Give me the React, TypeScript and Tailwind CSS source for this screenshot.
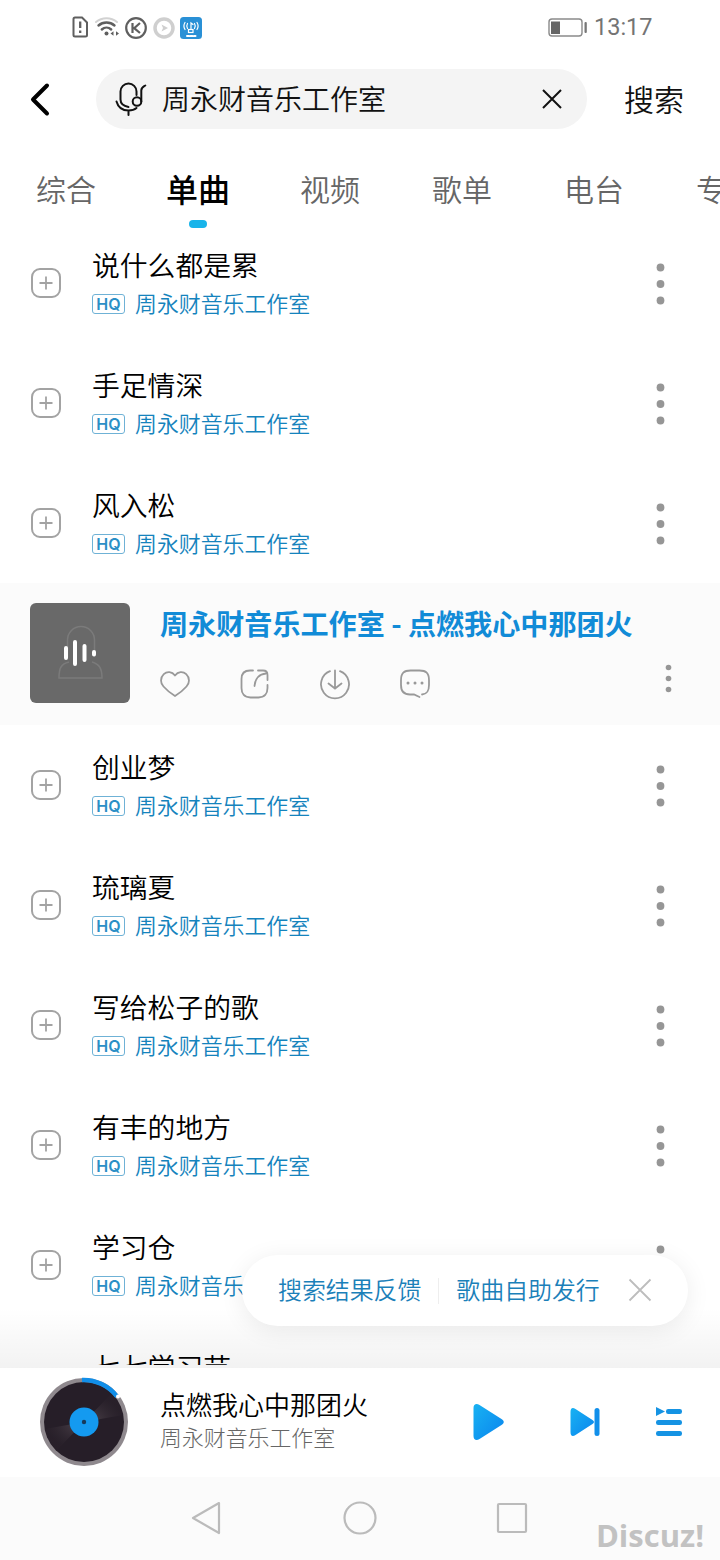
import React, { useState } from 'react';

interface SongRowProps {
  title: string;
  artist: string;
}

const ARTIST = '周永财音乐工作室';
const TABS = ['综合', '单曲', '视频', '歌单', '电台', '专辑'];
const SONGS_BEFORE = ['说什么都是累', '手足情深', '风入松'];
const SONGS_AFTER = ['创业梦', '琉璃夏', '写给松子的歌', '有丰的地方', '学习仓', '七七学习节'];

const StatusBar: React.FC = () => (
  <div className="flex h-14 items-center justify-between pl-[71px] pr-[68px]">
    <div className="flex items-center gap-[5px]">
      <svg width="18" height="24" viewBox="0 0 18 24" fill="none" stroke="#5f5f5f" strokeWidth="2">
        <path d="M2.500 3a1.500 1.500 0 0 1 1.500-1.500H11l5 5V19a1.500 1.500 0 0 1-1.500 1.500H4a1.500 1.500 0 0 1-1.500-1.500Z" />
        <path d="M9.200 5.500v6.500M9.200 14.500v2.500" strokeWidth="2.300" />
      </svg>
      <svg width="26" height="24" viewBox="0 0 26 24" fill="none" strokeWidth="2" strokeLinecap="round">
        <path d="M2 6C8 1 17 1 23 6" stroke="#d2d2d2" />
        <path d="M4.500 9.500C9 5.500 16 5.500 20.500 9.500" stroke="#5f5f5f" strokeWidth="2.400" />
        <path d="M7.800 13.500C10.500 11 14.500 11 17.200 13.500" stroke="#5f5f5f" strokeWidth="2.400" />
        <circle cx="12.500" cy="17.500" r="2" fill="#5f5f5f" />
        <path d="M16.500 17.500l3-2.300v4.600ZM25 17.500l-3-2.300v4.600Z" fill="#5f5f5f" />
      </svg>
      <svg width="22" height="24" viewBox="0 0 22 24" fill="none" stroke="#5f5f5f" strokeWidth="2.200">
        <circle cx="11" cy="12" r="9.800" />
        <path d="M7.500 7v10M15 7l-5.800 5.200L15 17" />
      </svg>
      <svg width="22" height="24" viewBox="0 0 22 24" className="ml-px">
        <circle cx="11" cy="12" r="9" fill="none" stroke="#cfcfcf" strokeWidth="3.500" />
        <path d="M8.500 8.500l6.500 3.500-6.500 3.500 1.500-3.500Z" fill="#cfcfcf" />
      </svg>
      <svg width="22" height="24" viewBox="0 0 22 24" fill="none" stroke="#fff" strokeWidth="1.200" strokeLinecap="round">
        <rect y="1" width="22" height="22" rx="3.500" fill="#2990d6" stroke="none" />
        <path d="M5 6.500q-2.200 3.500 0 7M7.500 7.500q-1.500 2.500 0 5M17 6.500q2.200 3.500 0 7M14.500 7.500q1.500 2.500 0 5M11 13V7l2 1.500" />
        <rect x="8.500" y="13.500" width="4.500" height="3" />
        <path d="M7 20h2M10.500 20h2M14 20h1.500" strokeWidth="2" />
      </svg>
    </div>
    <div className="flex items-center">
      <svg width="40" height="20" viewBox="0 0 40 20">
        <rect x="1" y="1" width="33" height="17" rx="3" fill="none" stroke="#8a8a8a" strokeWidth="1.400" />
        <rect x="3" y="3.500" width="9" height="12.500" fill="#666" />
        <rect x="36.500" y="4" width="2.300" height="11" rx="1" fill="#777" />
      </svg>
      <span className="ml-[6px] w-[58px] whitespace-nowrap font-['Roboto','Noto_Sans_CJK_SC',sans-serif] text-[23.500px] leading-none text-[#747474]">13:17</span>
    </div>
  </div>
);

const SearchBar: React.FC = () => {
  const [query, setQuery] = useState(ARTIST);

  return (
    <div className="flex h-[86px] items-center pl-[28px]">
      <svg width="24" height="36" viewBox="0 0 24 36" fill="none" stroke="#000" strokeWidth="4" strokeLinecap="round" strokeLinejoin="round">
        <path d="M19 4.500L5 18.500l14 14" />
      </svg>
      <div className="ml-[44px] flex h-[60px] w-[491px] items-center rounded-full bg-[#f4f4f4] pl-[19px] pr-[24px]">
        <svg width="34" height="36" viewBox="0 0 34 36" fill="none" stroke="#111" strokeWidth="2" strokeLinecap="round">
          <path d="M21.500 14V10.500a8 8 0 0 0-16 0v8c0 3.500 3 6.500 8 7.500" />
          <path d="M1.500 20.500c1.500 5.500 6 9 12 9 3.500 0 6-.8 8-2.500M13.500 30v4" />
          <circle cx="22" cy="20.500" r="4.300" />
          <path d="M26.300 20.500V9.500c0-3 1.500-3.500 4-5" />
        </svg>
        <input
          className="mb-[2px] ml-[13px] w-[340px] bg-transparent text-[28px] font-[350] leading-9 text-[#111] outline-none"
          value={query}
          onChange={e => setQuery(e.target.value)}
        />
        <svg width="22" height="22" viewBox="0 0 22 22" className="ml-auto shrink-0" stroke="#111" strokeWidth="2" onClick={() => setQuery('')}>
          <path d="M2 2l18 18M20 2L2 20" />
        </svg>
      </div>
      <button className="mb-[3px] ml-[37px] text-[30px] font-[350] leading-10 text-[#111]">搜索</button>
    </div>
  );
};

const Tabs: React.FC = () => {
  const [active, setActive] = useState(1);

  return (
    <div className="flex h-[90px] overflow-hidden">
      {TABS.map((tab, i) => (
        <button
          key={tab}
          onClick={() => setActive(i)}
          className="flex w-[132px] shrink-0 flex-col items-center pt-[24px]"
        >
          <span className={i === active ? 'text-[32px] font-medium leading-[44px] text-black' : 'text-[30px] font-[350] leading-[44px] text-[#666]'}>
            {tab}
          </span>
          {i === active && <span className="mt-[10px] h-2 w-[18px] rounded-full bg-[#18b4ea]" />}
        </button>
      ))}
    </div>
  );
};

const SongRow: React.FC<SongRowProps> = ({ title, artist }) => (
  <div className="flex h-[120px] shrink-0 items-center pl-[30px] pr-[53px]">
    <svg width="32" height="32" viewBox="0 0 32 32" fill="none" stroke="#a3a3a3" strokeWidth="2">
      <rect x="2" y="2" width="28" height="28" rx="8" />
      <path d="M16 9.500v13M9.500 16h13" strokeWidth="1.800" />
    </svg>
    <div className="ml-[30px] flex-1">
      <div className="text-[27.800px] font-[350] leading-9 text-black">{title}</div>
      <div className="mt-[6px] flex h-8 items-center">
        <span className="flex h-5 w-[33px] items-center justify-center rounded-[3px] border border-[#6fb2d6] font-['Inter','Noto_Sans_CJK_SC',sans-serif] text-[16px] font-semibold leading-none text-[#2b8fc6]">
          HQ
        </span>
        <span className="mb-[3px] ml-[10px] text-[21.900px] font-[350] leading-8 text-[#1583bd]">{artist}</span>
      </div>
    </div>
    <svg width="12" height="44" viewBox="0 0 12 44" fill="#969696">
      <circle cx="5.500" cy="6.500" r="3.900" />
      <circle cx="5.500" cy="23" r="3.900" />
      <circle cx="5.500" cy="39.500" r="3.900" />
    </svg>
  </div>
);

const PlayingRow: React.FC = () => (
  <div className="flex h-[142px] shrink-0 items-center bg-[#fbfbfb] pl-[30px] pr-[45px]">
    <div className="mb-[2px] flex h-[100px] w-[100px] items-center justify-center rounded-[6px] bg-[#696969]">
      <svg width="50" height="60" viewBox="0 0 50 60" fill="none">
        <path d="M12.500 34V17a13 13 0 0 1 27 0V34M14 39C6 41 4 45 4 55h43C47 45 44 41 37 39" stroke="#7b7b7b" strokeWidth="1.500" />
        <path d="M11 25v10M20 19v22M29.500 23v14M39 29v2.500" stroke="#fff" strokeWidth="4" strokeLinecap="round" />
      </svg>
    </div>
    <div className="ml-[30px] flex-1 pb-[4px]">
      <div className="whitespace-nowrap text-[28.100px] font-bold leading-9 text-[#118bd7]">{ARTIST} - 点燃我心中那团火</div>
      <div className="mt-[27px] flex gap-12 text-[#999]">
        <svg width="32" height="32" viewBox="0 0 32 32" className="-ml-px" fill="none" stroke="currentColor" strokeWidth="1.800" strokeLinejoin="round">
          <path d="M16 7.500C13 3.500 8 3.200 4.800 6.200 1 9.800 1.300 15 4.500 18.500 8 22.500 12 25.500 16 28c4-2.500 8-5.500 11.500-9.500 3.200-3.500 3.500-8.700-.3-12.300C24 3.200 19 3.500 16 7.500Z" />
        </svg>
        <svg width="32" height="32" viewBox="0 0 32 32" fill="none" stroke="currentColor" strokeWidth="1.800" strokeLinecap="round">
          <path d="M14 2.500h-3C5 2.500 2.500 5.500 2.500 11v9c0 6 3 9.500 9 9.500h8c6 0 9-3.500 9-9.500v-3" />
          <path d="M19 2.500h5c3 0 4.500 1.500 4.500 4.500v5M27 5.500C20.500 6 16 10.500 15.500 18" />
        </svg>
        <svg width="32" height="32" viewBox="0 0 32 32" fill="none" stroke="currentColor" strokeWidth="1.800" strokeLinecap="round">
          <path d="M11 3.200A14 14 0 1 0 21 3.200M16 2.500V20M9.500 15.500L16 20.500l6.500-5" />
        </svg>
        <svg width="32" height="32" viewBox="0 0 32 32" fill="none" stroke="currentColor" strokeWidth="1.800" strokeLinecap="round">
          <path d="M23 26.500c5-.5 7-3 7-9.500v-5C30 5 27 2.500 20.500 2.500h-9C5 2.500 2 5 2 12v5c0 7 3 9.500 9 9.500h4l5.500 2.500" />
          <path d="M9 15h.01M16 15h.01M23 15h.01" strokeWidth="3" />
        </svg>
      </div>
    </div>
    <svg width="12" height="32" viewBox="0 0 12 32" className="mt-[50px]" fill="#969696">
      <circle cx="5.500" cy="4.500" r="2.800" />
      <circle cx="5.500" cy="15.500" r="2.800" />
      <circle cx="5.500" cy="26.500" r="2.800" />
    </svg>
  </div>
);

const FeedbackPill: React.FC = () => (
  <div className="absolute left-[242px] top-[1255px] flex h-[71px] w-[446px] items-center rounded-full bg-white pl-[36px] text-[23.900px] font-[350] text-[#1b80b9] shadow-[0_4px_24px_rgba(0,0,0,0.08)]">
    <span className="mb-[4px]">搜索结果反馈</span>
    <span className="ml-[17px] h-[26px] w-px bg-[#eee]" />
    <span className="mb-[4px] ml-[17px]">歌曲自助发行</span>
    <svg width="24" height="24" viewBox="0 0 24 24" className="ml-[28px] mb-[2px]" stroke="#bdbdbd" strokeWidth="1.800">
      <path d="M1.500 1.500l21 21M22.500 1.500l-21 21" />
    </svg>
  </div>
);

const Player: React.FC = () => (
  <div className="flex h-[109px] shrink-0 items-center bg-white pb-[2px] pl-[39px] pr-[36px]">
    <svg width="90" height="90" viewBox="0 0 90 90">
      <defs>
        <radialGradient id="shine">
          <stop offset="0.200" stopColor="#6b6068" stopOpacity="0.500" />
          <stop offset="1" stopColor="#3a3038" stopOpacity="0.100" />
        </radialGradient>
      </defs>
      <circle cx="45" cy="45" r="44" fill="#8f898e" />
      <circle cx="45" cy="45" r="40" fill="#261e28" />
      <path d="M45 45L72 17A40 40 0 0 1 84 38ZM45 45L18 73A40 40 0 0 1 6 52Z" fill="url(#shine)" />
      <path d="M43 3A42 42 0 0 1 78 19.500" fill="none" stroke="#118ee8" strokeWidth="4.500" />
      <circle cx="79" cy="19.500" r="2" fill="#fff" />
      <circle cx="45" cy="45" r="14.500" fill="#149af0" />
      <circle cx="45" cy="45" r="2.200" fill="#173b5c" />
    </svg>
    <div className="ml-[31px] flex-1 pb-[6px]">
      <div className="text-[26px] font-[350] leading-9 text-black">点燃我心中那团火</div>
      <div className="text-[21.900px] font-light leading-[30px] text-[#666]">{ARTIST}</div>
    </div>
    <div className="flex items-center">
      <svg width="34" height="40" viewBox="0 0 34 40">
        <defs>
          <linearGradient id="blue" x1="0" y1="0" x2="1" y2="1">
            <stop offset="0" stopColor="#18b2f2" />
            <stop offset="1" stopColor="#0a84ee" />
          </linearGradient>
        </defs>
        <path d="M2.500 6c0-4 3-5 6-3l22 14c3 2 3 4 0 6L8.500 37c-3 2-6 1-6-3Z" fill="url(#blue)" />
      </svg>
      <svg width="32" height="32" viewBox="0 0 32 32" className="ml-[64px]">
        <path d="M1.500 6c0-4 2-5 5-3l17 11c2 1.500 2 2.500 0 4l-17 11c-3 2-5 1-5-3Z" fill="url(#blue)" />
        <rect x="25.500" y="2" width="5" height="28" rx="2.500" fill="#118fea" />
      </svg>
      <svg width="30" height="32" viewBox="0 0 30 32" className="ml-[53px]" fill="#1593e3">
        <path d="M2 1l9 4.500-9 4.500Z" />
        <rect x="12" y="3" width="16" height="5" rx="2.200" />
        <rect x="2" y="14" width="26" height="5" rx="2.200" />
        <rect x="2" y="25" width="26" height="5" rx="2.200" />
      </svg>
    </div>
  </div>
);

const SystemNav: React.FC = () => (
  <div className="relative flex h-[83px] shrink-0 items-center bg-[#fbfbfb] pb-[2px] pl-[189px]">
    <svg width="34" height="36" viewBox="0 0 34 36" fill="none" stroke="#bbb" strokeWidth="2.200" strokeLinejoin="round">
      <path d="M30 3L4 18l26 15Z" />
    </svg>
    <svg width="36" height="36" viewBox="0 0 36 36" className="ml-[119px]" fill="none" stroke="#bbb" strokeWidth="2.200">
      <circle cx="18" cy="18" r="15.500" />
    </svg>
    <svg width="32" height="32" viewBox="0 0 32 32" className="ml-[118px]" fill="none" stroke="#bbb" strokeWidth="2.200">
      <rect x="2" y="2" width="28" height="28" rx="1" />
    </svg>
    <span className="absolute right-[16px] top-[39px] font-['Open_Sans','Noto_Sans_CJK_SC',sans-serif] text-[31px] font-bold leading-[38px] text-[#c2c2c2]">
      Discuz!
    </span>
  </div>
);

const App: React.FC = () => (
  <div className="relative flex h-[1560px] w-[720px] flex-col overflow-hidden bg-white font-['Noto_Sans_CJK_SC',sans-serif]">
    <StatusBar />
    <SearchBar />
    <Tabs />
    <div className="-mt-[9px] flex h-[1142px] shrink-0 flex-col overflow-hidden">
      {SONGS_BEFORE.map(title => (
        <SongRow key={title} title={title} artist={ARTIST} />
      ))}
      <PlayingRow />
      {SONGS_AFTER.map(title => (
        <SongRow key={title} title={title} artist={ARTIST} />
      ))}
    </div>
    {/* fade above the player */}
    <div className="absolute left-0 top-[1308px] h-[60px] w-full bg-linear-to-b from-transparent to-black/5" />
    <FeedbackPill />
    <div className="h-[3px] shrink-0" />
    <Player />
    <SystemNav />
  </div>
);

export default App;
